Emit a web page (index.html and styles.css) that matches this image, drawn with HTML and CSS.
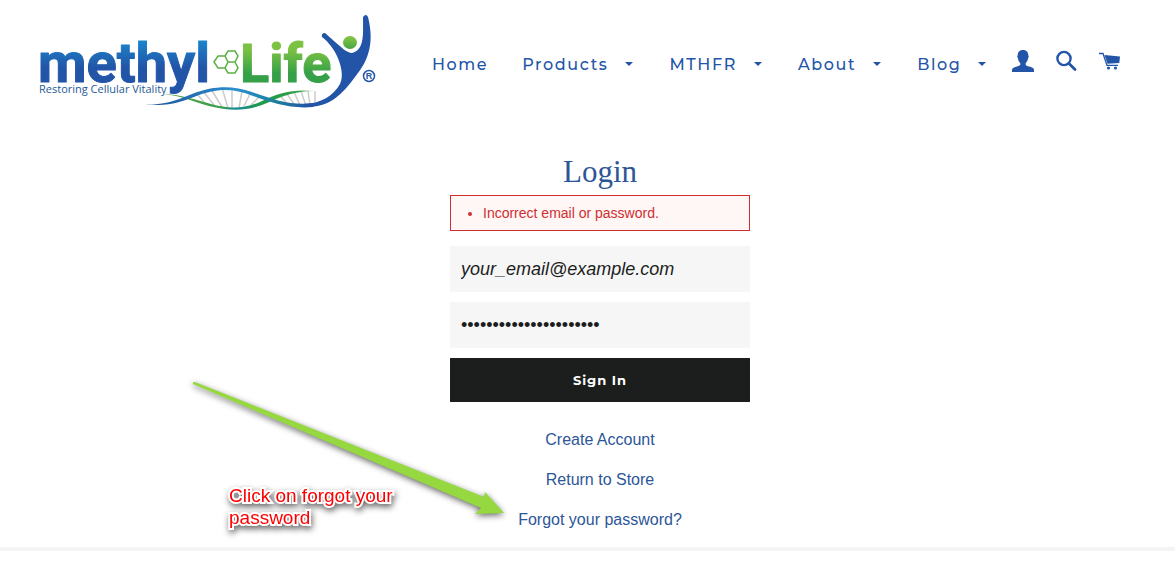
FILE: index.html
```html
<!DOCTYPE html>
<html lang="en">
<head>
    <meta charset="UTF-8">
    <meta name="viewport" content="width=device-width, initial-scale=1.0">
    <title>Login - Methyl-Life</title>
    <link rel="stylesheet" href="styles.css">
</head>
<body>
    <header class="site-header">
        <a href="#" class="logo" aria-label="Methyl-Life home">
            <svg width="344" height="106" viewBox="36 10 344 106">
                <defs>
                    <linearGradient id="blueText" gradientUnits="userSpaceOnUse" x1="0" y1="41" x2="0" y2="82">
                        <stop offset="0" stop-color="#1b84cb"/>
                        <stop offset="0.65" stop-color="#2255a8"/>
                    </linearGradient>
                    <linearGradient id="greenText" gradientUnits="userSpaceOnUse" x1="0" y1="41" x2="0" y2="82">
                        <stop offset="0.2" stop-color="#7cc242"/>
                        <stop offset="0.8" stop-color="#35a048"/>
                    </linearGradient>
                    <linearGradient id="headFill" x1="0" y1="0" x2="0" y2="1">
                        <stop offset="0.2" stop-color="#7cc242"/>
                        <stop offset="1" stop-color="#45a546"/>
                    </linearGradient>
                    <linearGradient id="blueStrand" gradientUnits="userSpaceOnUse" x1="145" y1="0" x2="310" y2="0">
                        <stop offset="0" stop-color="#1d4f98"/>
                        <stop offset="0.55" stop-color="#2a8fd0"/>
                        <stop offset="0.8" stop-color="#1b7f9c"/>
                        <stop offset="1" stop-color="#2255a8"/>
                    </linearGradient>
                    <linearGradient id="greenStrand" gradientUnits="userSpaceOnUse" x1="157" y1="0" x2="315" y2="0">
                        <stop offset="0" stop-color="#55a845"/>
                        <stop offset="0.4" stop-color="#3aa048"/>
                        <stop offset="0.5" stop-color="#1b8a9c"/>
                        <stop offset="0.65" stop-color="#1b9a4c"/>
                        <stop offset="0.9" stop-color="#35a048"/>
                        <stop offset="1" stop-color="#cccccc"/>
                    </linearGradient>
                </defs>

                <!-- DNA strand -->
                <path class="rungs" d="M197 94L204 102M203 91L214 105M211 89L222 107M222 88L228 108M232 89V108M242 91L239 108M250 94L244 106M259 97L251 105M281 97L286 102M287 94L294 104M294 92L300 105M301 91L306 106M308 91L310 105M315 91V103"/>
                <path fill="url(#greenStrand)" d="M157 94C178 93 197 100 211 104C228 109 244 109 260 102C280 92 294 89 315 91C297 91 284 95 267 103C247 112 229 111 209 106C190 101 179 94 157 94Z"/>
                <path fill="url(#blueStrand)" d="M145 104C165 106 179 99 192 94C216 85 233 86 252 92C275 100 292 106 315 103L313 107C290 109 272 103 253 96C232 88 217 88 194 97C180 102 168 107 145 104Z"/>

                <!-- Figure -->
                <path fill="#2255a8" d="M363 17Q366 13 368 17C374 41 370 59 355 77C343 93 331 107 308 107L303 104C321 104 334 95 340 84C344 76 341 64 336 54C332 46 326 40 322 37Q321 33 325 33L334 41C342 48 347 53 352 53C365 50 363 33 363 17Z"/>
                <ellipse cx="350" cy="42.500" rx="7" ry="6.500" fill="url(#headFill)"/>

                <!-- Hexagons -->
                <path class="hexagons" d="M214 62L218 56H225L228 62L225 68H218ZM225 56L228 51H235L238 56L235 62H228ZM228 62H235L238 68L235 73H228L225 68Z"/>

                <text class="logo-name" x="38" y="82" fill="url(#blueText)" stroke="url(#blueText)">methyl</text>
                <text class="logo-name logo-life" x="240" y="82" fill="url(#greenText)" stroke="url(#greenText)">Life</text>
                <text class="logo-tagline" x="39" y="93">Restoring Cellular Vitality</text>
                <circle class="logo-ring" cx="369" cy="76" r="5.500"/>
                <text class="logo-mark" x="369" y="79" text-anchor="middle">R</text>
            </svg>
        </a>

        <nav class="site-nav">
            <a href="#">Home</a>
            <a href="#" class="has-dropdown">Products</a>
            <a href="#" class="has-dropdown">MTHFR</a>
            <a href="#" class="has-dropdown">About</a>
            <a href="#" class="has-dropdown">Blog</a>
        </nav>

        <div class="header-icons">
            <a href="#" aria-label="Account">
                <svg width="22" height="22" viewBox="0 0 22 22">
                    <path fill="currentColor" d="M11 0C14 0 16.500 2 16.300 5.500C17 6 16.800 7.500 16 8.500C15.700 10.500 14.800 12 13.700 13V15C16 17 22 16.500 22 20V22H0V20C0 16.500 6 17 8.300 15V13C7.200 12 6.300 10.500 6 8.500C5.200 7.500 5 6 5.700 5.500C5.500 2 8 0 11 0Z"/>
                </svg>
            </a>
            <a href="#" aria-label="Search">
                <svg width="22" height="22" viewBox="0 0 22 22">
                    <circle cx="9" cy="8.500" r="6.600" fill="none" stroke="currentColor" stroke-width="2.400"/>
                    <path d="M14 13.500L20 19.500" stroke="currentColor" stroke-width="2.800" stroke-linecap="round"/>
                </svg>
            </a>
            <a href="#" aria-label="Cart">
                <svg width="22" height="22" viewBox="0 0 22 22">
                    <path fill="none" stroke="currentColor" stroke-width="1.300" d="M1 3.500H5L9 15.400H20"/>
                    <path fill="currentColor" d="M6.500 5L22 6.500L21.300 13L9.500 13.800Z"/>
                    <circle cx="10.500" cy="18" r="1.600" fill="currentColor"/>
                    <circle cx="17.500" cy="18" r="1.600" fill="currentColor"/>
                </svg>
            </a>
        </div>
    </header>

    <main class="login">
        <h1>Login</h1>
        <form class="login-form">
            <ul class="errors">
                <li>Incorrect email or password.</li>
            </ul>
            <input type="email" class="email-field" aria-label="Email" value="your_email@example.com">
            <input type="password" aria-label="Password" value="abcdefghijklmnopqrstuv">
            <button type="submit">Sign In</button>
        </form>
        <div class="login-links">
            <a href="#">Create Account</a>
            <a href="#">Return to Store</a>
            <a href="#">Forgot your password?</a>
        </div>

        <!-- Help callout pointing at the password link -->
        <svg class="callout-arrow" width="330" height="150" viewBox="0 0 330 150">
            <path fill="#95d83f" d="M13 12L15 12L304 127L305 122L324 143L295 144L301 138L13 14Z"/>
        </svg>
        <p class="callout-text">Click on forgot your<br>password</p>
    </main>

    <hr class="divider">
</body>
</html>
```

FILE: styles.css
```css
* {
    margin: 0;
    padding: 0;
    box-sizing: border-box;
}

body {
    font-family: "Liberation Sans", Arial, sans-serif;
    font-size: 16px;
    background: #ffffff;
    color: #1c1d1d;
}

a {
    color: #2c5698;
    text-decoration: none;
}

/* Header */
.site-header {
    display: flex;
    align-items: center;
    padding: 10px 55px 0 36px;
}

.logo svg {
    display: block;
}

.logo-name {
    font-family: Roboto, sans-serif;
    font-size: 56px;
    font-weight: 700;
    stroke-width: 1px;
    stroke-linejoin: round;
}

.logo-life {
    font-size: 54px;
}

.logo-tagline {
    font-family: "Open Sans", sans-serif;
    font-size: 11px;
    fill: #1f5c96;
}

.logo-mark {
    font-family: "Liberation Sans", Arial, sans-serif;
    font-size: 9px;
    font-weight: 700;
    fill: #2255a8;
}

.logo-ring {
    fill: none;
    stroke: #2255a8;
    stroke-width: 1.5;
}

.rungs {
    fill: none;
    stroke: #cccccc;
    stroke-width: 1.5;
}

.hexagons {
    fill: none;
    stroke: #5bb046;
    stroke-width: 1.5;
}

.site-nav {
    display: flex;
    gap: 34px;
    margin-top: 2px;
    margin-left: 52px;
}

.site-nav a {
    display: flex;
    align-items: center;
    font-family: Montserrat, Inter, sans-serif;
    font-size: 16px;
    font-weight: 500;
    letter-spacing: 0.1em;
    color: #2255a8;
}

.has-dropdown::after {
    content: "";
    margin: 0 2px 0 17px;
    border: 4px solid transparent;
    border-top-color: #2255a8;
    border-bottom: 0;
}

.header-icons {
    display: flex;
    gap: 21px;
    margin-left: auto;
}

.header-icons a {
    color: #2255a8;
}

/* Login */
.login {
    position: relative;
    display: flex;
    flex-direction: column;
    align-items: center;
    padding: 36px 0 17px 25px;
}

.login h1 {
    font-family: "Liberation Serif", serif;
    font-size: 31px;
    font-weight: 400;
    line-height: 40px;
    margin-bottom: 3px;
    color: #2c5698;
}

.login-form {
    display: flex;
    flex-direction: column;
    gap: 10px;
    width: 100%;
    max-width: 300px;
}

.errors {
    margin-bottom: 5px;
    padding: 8px 10px 8px 32px;
    border: 1px solid #d02e2e;
    background: #fff6f6;
    color: #d02e2e;
    font-size: 14px;
    line-height: 18px;
}

.login-form input {
    width: 100%;
    height: 46px;
    padding: 0 11px;
    border: 0;
    background: #f6f6f6;
    color: #1c1d1d;
    font-family: inherit;
    font-size: 18px;
}

.login-form .email-field {
    font-style: italic;
}

.login-form button {
    height: 44px;
    border: 0;
    background: #1c1d1d;
    color: #ffffff;
    font-family: Montserrat, Inter, sans-serif;
    font-size: 13px;
    font-weight: 700;
    letter-spacing: 1px;
    cursor: pointer;
}

.login-links {
    display: flex;
    flex-direction: column;
    align-items: center;
    gap: 20px;
    margin-top: 28px;
    line-height: 20px;
}

/* Callout */
.callout-arrow {
    position: absolute;
    left: 180px;
    top: 254px;
    filter: drop-shadow(0 2px 3px rgba(0, 0, 0, 0.6));
}

.callout-text {
    position: absolute;
    left: 229px;
    bottom: 18px;
    color: #ff0000;
    font-size: 19px;
    line-height: 22px;
    -webkit-text-stroke: 4px #ffffff;
    paint-order: stroke fill;
    filter: drop-shadow(1px 3px 3px rgba(0, 0, 0, 0.6));
}

.divider {
    border: 0;
    height: 4px;
    background: #f4f4f4;
}
```
